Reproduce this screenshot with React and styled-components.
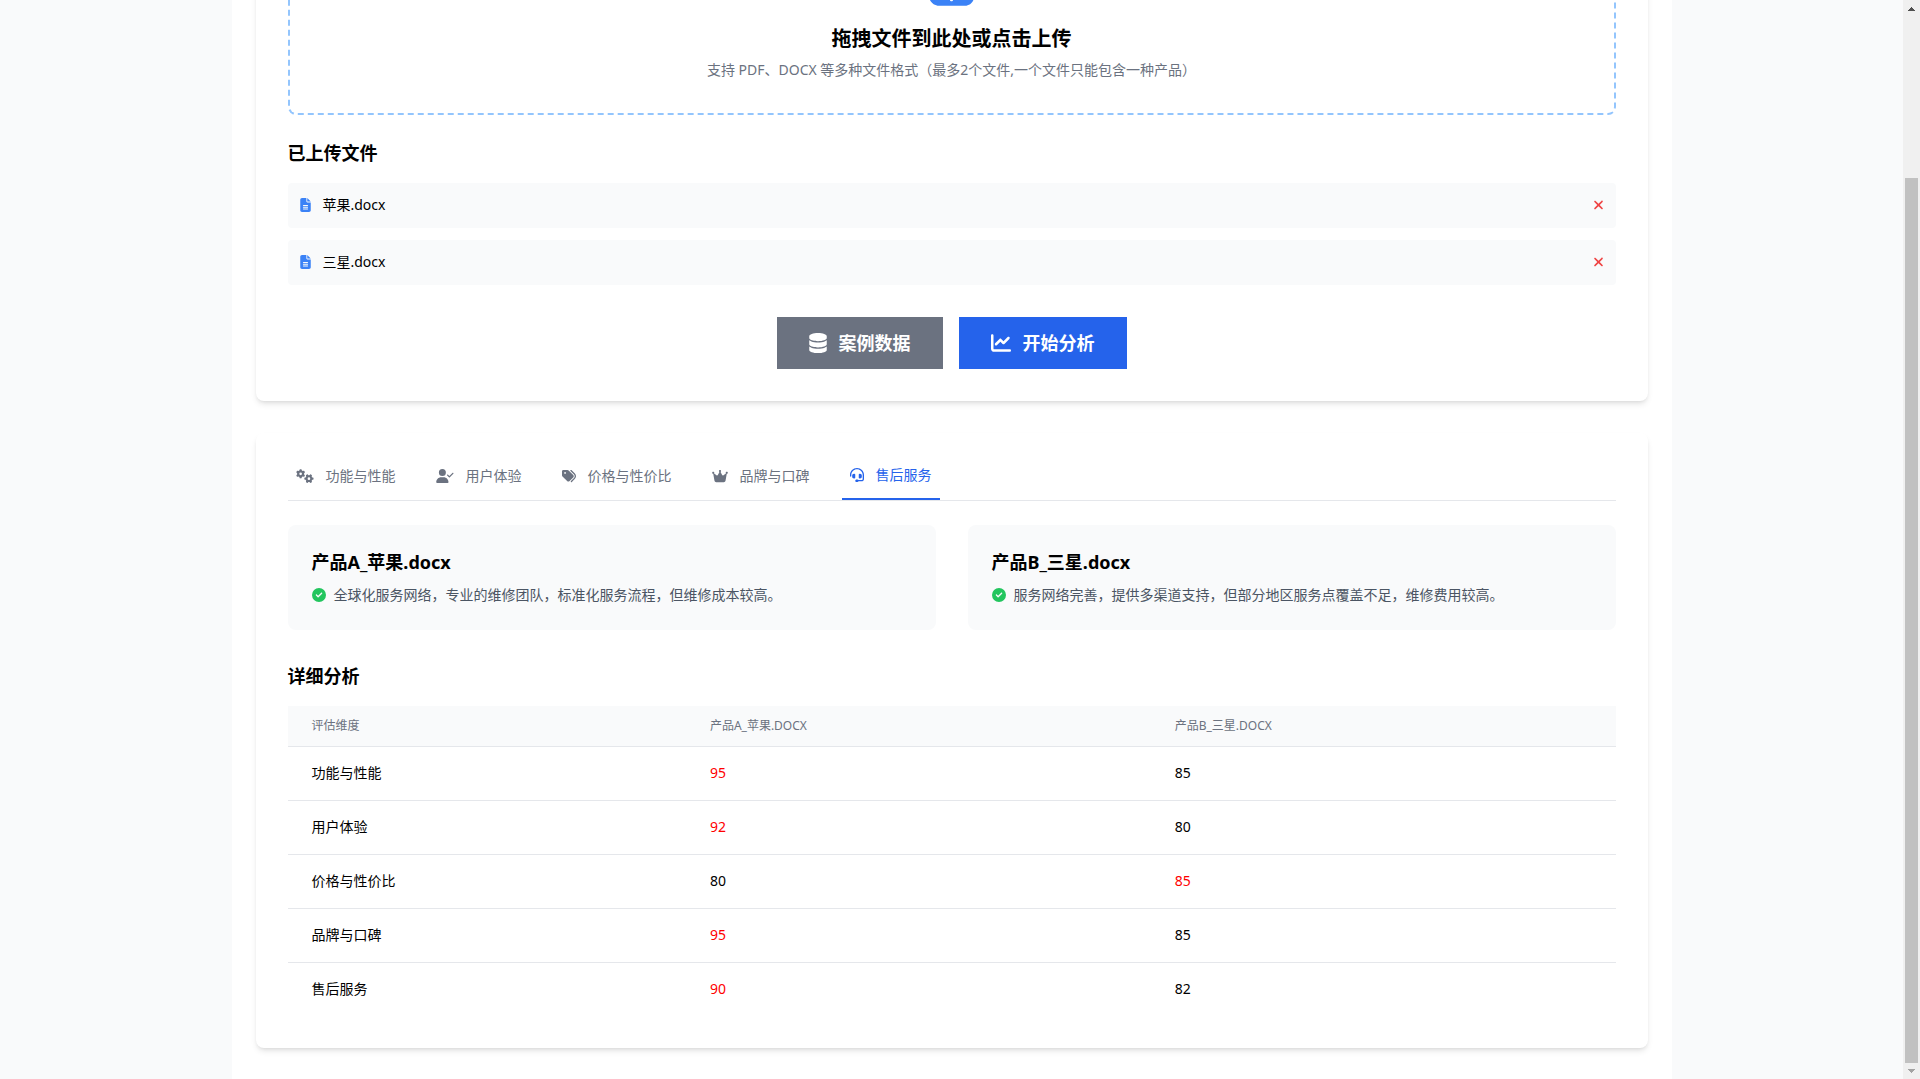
import React, { useState } from 'react';
import styled, { createGlobalStyle } from 'styled-components';
import {
    FaChartLine,
    FaCircleCheck,
    FaCloudArrowUp,
    FaCrown,
    FaDatabase,
    FaFileLines,
    FaGears,
    FaHeadset,
    FaTags,
    FaUserCheck,
    FaXmark,
} from 'react-icons/fa6';

const GlobalStyle = createGlobalStyle`
    * {
        box-sizing: border-box;
    }
    body {
        margin: 0;
        background-color: #f9fafb;
        color: #000;
        font-family: "Noto Sans", "Noto Sans CJK SC", sans-serif;
        font-size: 14px;
        line-height: 20px;
    }
    h2, h3, p, ul {
        margin: 0;
        padding: 0;
    }
    button {
        font: inherit;
        border: none;
        background: none;
        padding: 0;
        cursor: pointer;
    }
    svg {
        display: block;
        flex-shrink: 0;
    }
`;

const Window = styled.div`
    display: flex;
    height: 100vh;
    overflow: hidden;
`;

/* the view rests at the end of the page, the top runs out of sight */
const View = styled.div`
    flex: 1;
    display: flex;
    flex-direction: column;
    justify-content: flex-end;
    overflow: hidden;
`;

const Main = styled.main`
    width: 100%;
    max-width: 1440px;
    flex-shrink: 0;
    margin: 0 auto;
    padding: 24px 24px 31px;
    display: flex;
    flex-direction: column;
    gap: 32px;
    background-color: #fff;
`;

const Card = styled.section`
    padding: 32px;
    border-radius: 8px;
    background-color: #fff;
    box-shadow: 0 4px 6px -1px rgba(0, 0, 0, 0.1), 0 2px 4px -2px rgba(0, 0, 0, 0.1);
`;

const DropZone = styled.label`
    display: flex;
    flex-direction: column;
    align-items: center;
    padding: 32px 32px 33px;
    border: 2px dashed #93c5fd;
    border-radius: 8px;
    cursor: pointer;
    input {
        display: none;
    }
    svg {
        font-size: 36px;
        width: 45px;
        color: #3b82f6;
        margin-bottom: 17px;
    }
    strong {
        font-size: 20px;
        line-height: 28px;
        font-weight: 700;
        margin-bottom: 7px;
    }
    span {
        color: #6b7280;
    }
`;

const Title = styled.h2`
    font-size: 18px;
    line-height: 28px;
    font-weight: 700;
    margin: ${({ $top }) => $top}px 0 16px;
`;

const FileList = styled.ul`
    display: flex;
    flex-direction: column;
    gap: 12px;
    list-style: none;
`;

const FileRow = styled.li`
    display: flex;
    align-items: center;
    gap: 12px;
    padding: 12px 12px 13px;
    border-radius: 4px;
    background-color: #f9fafb;
    .name {
        flex: 1;
    }
    svg {
        width: 11px;
        height: 14px;
        color: #3b82f6;
    }
    button svg {
        color: #ef4444;
    }
`;

const Actions = styled.div`
    display: flex;
    justify-content: center;
    gap: 16px;
    margin-top: 32px;
`;

const ActionButton = styled.button`
    && {
        display: flex;
        align-items: center;
        gap: 12px;
        padding: 12px 32px;
        background-color: ${({ $primary }) => ($primary ? '#2563eb' : '#6b7280')};
        color: #fff;
        font-size: 18px;
        line-height: 28px;
        font-weight: 700;
    }
    svg {
        width: ${({ $iconWidth }) => $iconWidth}px;
        height: 20px;
    }
`;

const Tabs = styled.div`
    display: flex;
    gap: 24px;
    border-bottom: 1px solid #e5e7eb;
    margin-bottom: 24px;
`;

const Tab = styled.button`
    && {
        display: flex;
        align-items: center;
        gap: 12px;
        padding: 0 8px 13px;
        color: ${({ $active }) => ($active ? '#2563eb' : '#6b7280')};
        border-bottom: ${({ $active }) => ($active ? '2px solid #2563eb' : 'none')};
    }
    svg {
        width: ${({ $iconWidth }) => $iconWidth}px;
        height: 14px;
    }
`;

const Products = styled.div`
    display: grid;
    grid-template-columns: 1fr 1fr;
    gap: 32px;
`;

const Product = styled.article`
    padding: 24px 24px 25px;
    border-radius: 8px;
    background-color: #f9fafb;
    h3 {
        font-size: 18px;
        line-height: 26px;
        font-weight: 700;
        margin-bottom: 10px;
    }
    p {
        display: flex;
        align-items: center;
        gap: 8px;
        color: #4b5563;
    }
    svg {
        font-size: 14px;
        color: #22c55e;
    }
`;

const Table = styled.table`
    width: 100%;
    table-layout: fixed;
    border-spacing: 0;
    th, td {
        padding: 16px 24px 17px;
        text-align: left;
    }
    th {
        width: 35%;
        padding: 12px 24px;
        border-bottom: 1px solid #e5e7eb;
        background-color: #f9fafb;
        color: #6b7280;
        font-size: 12px;
        line-height: 16px;
        font-weight: 400;
        text-transform: uppercase;
    }
    th:first-child {
        width: 30%;
    }
    tbody tr:not(:last-child) td {
        border-bottom: 1px solid #e5e7eb;
    }
`;

const Score = styled.td`
    color: ${({ $best }) => ($best ? '#ff0000' : '#000')};
`;

const ScrollBar = styled.div`
    width: 17px;
    flex-shrink: 0;
    display: flex;
    flex-direction: column;
    align-items: center;
    background-color: #f0f0f0;
    svg {
        width: 17px;
        height: 16px;
    }
`;

const Track = styled.div`
    flex: 1;
    width: 13px;
    display: flex;
    flex-direction: column;
    justify-content: flex-end;
`;

const Thumb = styled.div`
    height: 84.5%;
    background-color: #c1c1c1;
`;

const tabs = [
    { label: '功能与性能', Icon: FaGears, iconWidth: 18 },
    { label: '用户体验', Icon: FaUserCheck, iconWidth: 18 },
    { label: '价格与性价比', Icon: FaTags, iconWidth: 14 },
    { label: '品牌与口碑', Icon: FaCrown, iconWidth: 16 },
    { label: '售后服务', Icon: FaHeadset, iconWidth: 14 },
];

const products = [
    {
        name: '产品A_苹果.docx',
        text: '全球化服务网络，专业的维修团队，标准化服务流程，但维修成本较高。',
    },
    {
        name: '产品B_三星.docx',
        text: '服务网络完善，提供多渠道支持，但部分地区服务点覆盖不足，维修费用较高。',
    },
];

const scores = [
    { name: '功能与性能', a: 95, b: 85 },
    { name: '用户体验', a: 92, b: 80 },
    { name: '价格与性价比', a: 80, b: 85 },
    { name: '品牌与口碑', a: 95, b: 85 },
    { name: '售后服务', a: 90, b: 82 },
];

export default function App() {

    const [files, setFiles] = useState(['苹果.docx', '三星.docx']);
    const [activeTab, setActiveTab] = useState('售后服务');

    const removeFile = (name) => {
        setFiles(files.filter((file) => file !== name));
    }

  return (
    <>
      <GlobalStyle />
      <Window>
        <View>
          <Main>
            <Card>
              <DropZone>
                <input type="file" accept=".pdf,.docx" multiple />
                <FaCloudArrowUp />
                <strong>拖拽文件到此处或点击上传</strong>
                <span>支持 PDF、DOCX 等多种文件格式（最多2个文件,一个文件只能包含一种产品）</span>
              </DropZone>
              <Title $top={24}>已上传文件</Title>
              <FileList>
                {files.map((file) => (
                    <FileRow key={file}>
                      <FaFileLines />
                      <span className="name">{file}</span>
                      <button type="button" aria-label="删除" onClick={() => removeFile(file)}>
                        <FaXmark />
                      </button>
                    </FileRow>
                ))}
              </FileList>
              <Actions>
                <ActionButton type="button" $iconWidth={18}>
                  <FaDatabase />
                  案例数据
                </ActionButton>
                <ActionButton type="button" $iconWidth={20} $primary>
                  <FaChartLine />
                  开始分析
                </ActionButton>
              </Actions>
            </Card>
            <Card>
              <Tabs>
                {tabs.map(({ label, Icon, iconWidth }) => (
                    <Tab
                      key={label}
                      type="button"
                      $active={label === activeTab}
                      $iconWidth={iconWidth}
                      onClick={() => setActiveTab(label)}
                    >
                      <Icon />
                      {label}
                    </Tab>
                ))}
              </Tabs>
              <Products>
                {products.map((product) => (
                    <Product key={product.name}>
                      <h3>{product.name}</h3>
                      <p>
                        <FaCircleCheck />
                        {product.text}
                      </p>
                    </Product>
                ))}
              </Products>
              <Title $top={32}>详细分析</Title>
              <Table>
                <thead>
                  <tr>
                    <th>评估维度</th>
                    {products.map((product) => (
                        <th key={product.name}>{product.name}</th>
                    ))}
                  </tr>
                </thead>
                <tbody>
                  {scores.map(({ name, a, b }) => (
                      <tr key={name}>
                        <td>{name}</td>
                        <Score $best={a > b}>{a}</Score>
                        <Score $best={b > a}>{b}</Score>
                      </tr>
                  ))}
                </tbody>
              </Table>
            </Card>
          </Main>
        </View>
        <ScrollBar>
          <svg viewBox="0 0 17 16">
            <path d="M5 11h7v-1h-1v-1h-1v-1h-1v-1h-1v1h-1v1h-1v1h-1z" fill="#505050" />
          </svg>
          <Track>
            <Thumb />
          </Track>
          <svg viewBox="0 0 17 16">
            <path d="M5 6h7v1h-1v1h-1v1h-1v1h-1v-1h-1v-1h-1v-1h-1z" fill="#a3a3a3" />
          </svg>
        </ScrollBar>
      </Window>
    </>
  )
}
